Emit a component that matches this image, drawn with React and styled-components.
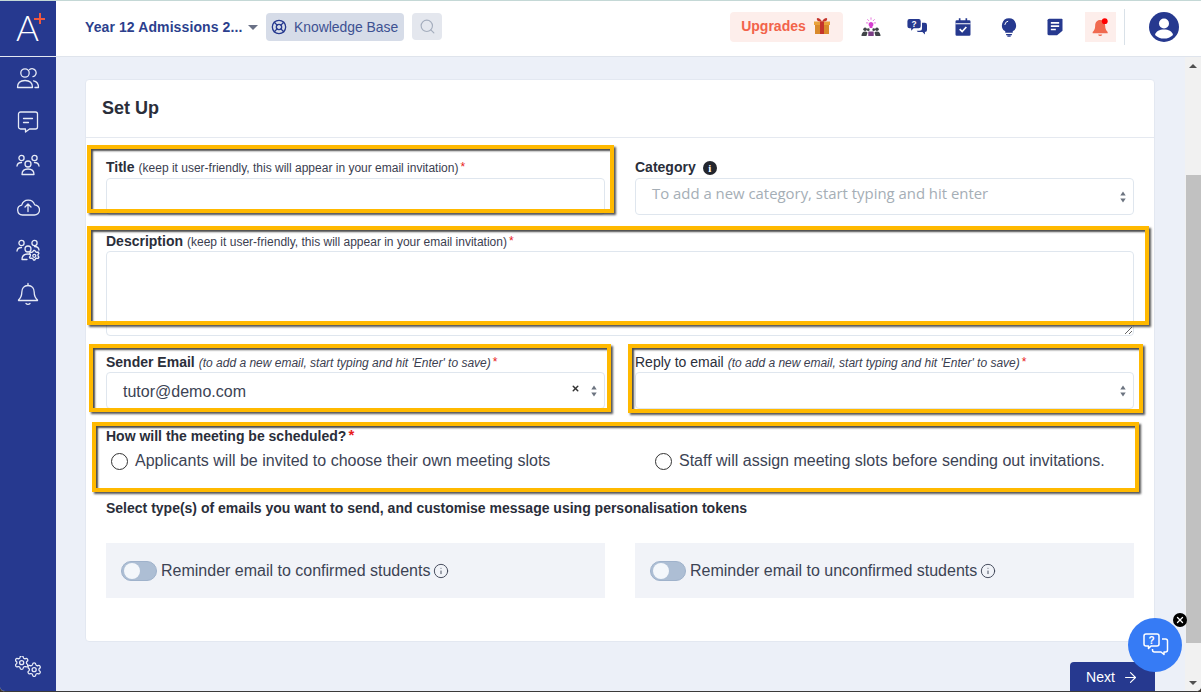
import React from "react";
import styled, { createGlobalStyle } from "styled-components";
import { LifeBuoy, Search, ArrowRight, X, Info } from "lucide-react";

const Global = createGlobalStyle`
  html, body { margin: 0; padding: 0; height: 692px; overflow: hidden; background: #3b332c; }
  * { box-sizing: border-box; }
  body { font-family: "Liberation Sans", Arial, sans-serif; color: #2a2e3a; }
`;

const Page = styled.div`
  width: 1201px; height: 692px; display: flex; position: relative; overflow: hidden;
  background: #ecf0f8; border-top: 1px solid #c4d8d6; border-bottom: 1px solid #3a3a3a;
  border-radius: 0 0 5px 5px;
`;
const Sidebar = styled.aside`
  width: 56px; flex: none; background: #26398f; display: flex; flex-direction: column; align-items: center;
`;
const Logo = styled.div`
  width: 56px; height: 56px; flex: none; border-bottom: 1px solid #e3e8f2; position: relative;
  display: flex; align-items: center; justify-content: center;
`;
const LogoA = styled.span`
  font-family: "Lato", sans-serif; font-weight: 300; font-size: 35px; line-height: 1; color: #fff; margin: -3px 1px 0 0;
`;
const LogoPlus = styled.span`
  position: absolute; left: 34px; top: 12px; width: 11px; height: 11px;
  background:
    linear-gradient(#f0583f, #f0583f) center / 11px 2px no-repeat,
    linear-gradient(#f0583f, #f0583f) center / 2px 11px no-repeat;
`;
const NavList = styled.nav`
  display: flex; flex-direction: column; align-items: center; gap: 19px; padding-top: 10px; flex: 1;
`;
const NavIcon = styled.svg`
  width: 24px; height: 24px; display: block; fill: none; stroke: #e6eaf6; stroke-width: 1.3;
  stroke-linecap: round; stroke-linejoin: round;
`;
const GearsIcon = styled(NavIcon)`
  width: 26px; height: 21px;
`;
const SidebarFoot = styled.div`
  padding-bottom: 14px;
`;
const Body = styled.div`
  flex: 1; display: flex; flex-direction: column; min-width: 0;
`;
const Header = styled.header`
  height: 56px; flex: none; background: #fff; border-bottom: 1px solid #dfe4ec;
  display: flex; align-items: center; padding: 0 22px 4px 29px;
`;
const Crumb = styled.span`
  font-size: 14px; font-weight: 700; color: #2c3f8d; width: 158px; white-space: nowrap; letter-spacing: .1px;
`;
const Caret = styled.span`
  width: 0; height: 0; margin: 2px 8px 0 5px; border-left: 5px solid transparent; border-right: 5px solid transparent;
  border-top: 5px solid #6a7186;
`;
const KbPill = styled.div`
  width: 138px; height: 28px; border-radius: 4px; background: #d6dce8; color: #3d5192; font-size: 13.9px;
  display: flex; align-items: center; gap: 7px; padding-left: 5px;
`;
const SearchBtn = styled.div`
  width: 30px; height: 27px; margin-left: 8px; border-radius: 4px; background: #e4e7ee; color: #a4adbd;
  display: flex; align-items: center; justify-content: center;
`;
const Spacer = styled.div` flex: 1; `;
const Upgrade = styled.div`
  width: 113px; height: 30px; border-radius: 4px; background: #fdeeeb; color: #f2634a; font-size: 14px; font-weight: 700;
  display: flex; align-items: center; justify-content: center; gap: 6px; padding-bottom: 2px;
`;
const TopIcons = styled.div`
  display: flex; align-items: center; gap: 26px; margin-left: 18px;
`;
const TopIcon = styled.svg`
  width: ${p => p.$size || 20}px; height: ${p => p.$size || 20}px; display: block; flex: none;
`;
const BellBox = styled.div`
  width: 31px; height: 30px; margin-left: 20px; background: #fdeeeb; display: flex; align-items: center; justify-content: center;
`;
const Divider = styled.div`
  width: 1px; height: 36px; background: #d9e1e8; margin: 0 24px 0 8px;
`;
const ContentRow = styled.div`
  flex: 1; display: flex; min-height: 0;
`;
const Scroll = styled.main`
  flex: 1; min-width: 0; overflow: hidden; padding: 22px 30px 0 29px;
`;
const Card = styled.section`
  position: relative; height: 563px; background: #fff; border: 1px solid #e3e8f1; border-radius: 4px;
`;
const CardHead = styled.div`
  height: 58px; border-bottom: 1px solid #e5e9f0; display: flex; align-items: center; padding: 0 16px;
`;
const CardTitle = styled.h2`
  margin: 0; font-size: 18px; font-weight: 700; color: #2a2e3a;
`;
const Form = styled.div`
  padding: 20px 20px 0;
`;
const Cols = styled.div`
  display: grid; grid-template-columns: 499px 499px; column-gap: 30px; margin-bottom: 16px;
`;
const Field = styled.div`
  display: flex; flex-direction: column; min-width: 0;
`;
const WideField = styled(Field)`
  margin-bottom: 16px;
`;
const Label = styled.div`
  height: 20px; display: flex; align-items: baseline; white-space: pre; font-size: 14px; color: #2a2e3a;
  line-height: ${p => (p.$raised ? 18 : 20)}px;
  font-weight: ${p => (p.$plain ? 400 : 700)};
`;
const Hint = styled.span`
  font-size: 12px; font-weight: 400; color: #3b4050; margin-left: 4px;
  font-style: ${p => (p.$italic ? "italic" : "normal")};
`;
const Req = styled.sup`
  color: #e81c1c; line-height: 0; margin-left: 2px; position: relative; top: -1px; vertical-align: baseline;
  font-size: ${p => (p.$big ? 15 : 12)}px; font-weight: ${p => (p.$big ? 700 : 400)};
`;
const TextInput = styled.input`
  height: 37px; width: 100%; border: 1px solid #dfe6ee; border-radius: 4px; background: #fff; outline: none; display: block;
`;
const Area = styled.textarea`
  height: 85px; width: 100%; border: 1px solid #dfe6ee; border-radius: 4px; background: #fff; outline: none; display: block; margin: 0;
`;
const SelectBox = styled.div`
  height: 37px; border: 1px solid #dfe6ee; border-radius: 4px; background: #fff; display: flex; align-items: center;
  padding: 0 4px 0 16px; font-size: 16px; color: #3c4354;
`;
const Placeholder = styled.span`
  flex: 1; font-family: "Open Sans", sans-serif; font-size: 14.9px; color: #a5aeb6; margin: -7px 0 0 0;
`;
const Value = styled.span`
  flex: 1; margin-top: 3px;
`;
const ClearX = styled(X)`
  color: #333; margin-right: 9px; margin-top: -5px; stroke-width: 4;
`;
const Updown = styled.svg`
  width: 10px; height: 14px; margin: 0 1px 0 0; fill: #6c7480; display: block;
`;
const QLabel = styled.div`
  margin-top: 17px; font-size: 14px; line-height: 20px; font-weight: 700; color: #2a2e3a;
`;
const RadioRow = styled.div`
  display: grid; grid-template-columns: 544px 1fr; margin-top: 3px; height: 24px; padding-left: 5px;
`;
const RadioItem = styled.label`
  display: flex; align-items: center; gap: 7px; font-size: 16px; color: #3c4354; white-space: nowrap;
`;
const RadioDot = styled.span`
  width: 17px; height: 17px; border-radius: 50%; border: 1.5px solid #333; background: #fff; flex: none;
`;
const SectionNote = styled.div`
  margin-top: 25px; font-size: 14px; line-height: 20px; font-weight: 700; color: #2a2e3a;
`;
const ToggleRow = styled.div`
  display: grid; grid-template-columns: 499px 499px; column-gap: 30px; margin-top: 25px;
`;
const ToggleCard = styled.div`
  height: 55px; background: #f1f3f8; display: flex; align-items: center; padding: 0 15px; font-size: 16px; color: #3c4354;
`;
const Switch = styled.span`
  width: 36px; height: 20px; border-radius: 10px; background: #adbed4; border: 1px solid #9fb2cb; position: relative; flex: none; margin-right: 4px;
  &::after { content: ""; position: absolute; left: 2px; top: 1px; width: 16px; height: 16px; border-radius: 50%; background: #f4f7fb; }
`;
const InfoMark = styled(Info)`
  margin-left: 3px; color: #3c4354; stroke-width: 1.4;
`;
const CatInfo = styled.span`
  width: 14px; height: 14px; border-radius: 50%; background: #23262e; color: #fff; font-size: 11px; font-weight: 700; line-height: 14px;
  text-align: center; margin-left: 7px; align-self: center; font-family: "Liberation Serif", serif;
`;
const Highlight = styled.div`
  position: absolute; pointer-events: none; border: 4px solid #ffb900;
  left: ${p => p.$x - 86}px; top: ${p => p.$y - 80}px; width: ${p => p.$w}px; height: ${p => p.$h}px;
  box-shadow: 2px 2px 2px rgba(30,30,30,.75), inset 2px 2px 2px rgba(30,30,30,.8);
`;
const NextWrap = styled.div`
  display: flex; justify-content: flex-end; margin-top: 20px;
`;
const NextBtn = styled.div`
  width: 85px; height: 36px; background: #26398f; color: #fff; border-radius: 4px 4px 0 0; font-size: 14px;
  display: flex; align-items: flex-start; justify-content: center; gap: 7px; padding-top: 7px;
`;
const Bar = styled.div`
  width: 16px; flex: none; background: #f1f1f1; display: flex; flex-direction: column; align-items: center; justify-content: space-between; position: relative;
`;
const BarArrow = styled.span`
  height: 17px; width: 100%; display: flex; align-items: center; justify-content: center;
  &::after { content: ""; border-left: 4px solid transparent; border-right: 4px solid transparent;
    ${p => (p.$down ? "border-top: 4px solid #505050;" : "border-bottom: 4px solid #505050;")} }
`;
const Thumb = styled.div`
  position: absolute; top: 118px; left: 1px; right: 0; height: 468px; background: #c1c1c1;
`;
const ChatFab = styled.div`
  position: absolute; left: 1128px; top: 617px; width: 54px; height: 54px; border-radius: 50%; background: #367bf5;
  display: flex; align-items: center; justify-content: center; padding-left: 2px;
`;
const ChatClose = styled.div`
  position: absolute; left: 1173px; top: 612px; width: 14px; height: 14px; border-radius: 50%; background: #000; color: #fff;
  display: flex; align-items: center; justify-content: center;
`;

const Arrows = () => (
  <Updown viewBox="0 0 10 14"><path d="M5 1.500l2.700 4H2.300zM5 12.500l2.700-4H2.300z" /></Updown>
);

const NavPeople = () => (
  <NavIcon viewBox="0 0 24 24"><circle cx="9" cy="6" r="4.2" /><path d="M13.6 2.6a4 4 0 1 1 3.4 7" /><path d="M1.5 20.5c0-4.6 3.2-7 7.5-7s7.5 2.4 7.5 7zM17.5 13.8c3 .5 5 2.8 5 6.7h-3.5" /></NavIcon>
);
const NavChat = () => (
  <NavIcon viewBox="0 0 24 24"><path d="M4.500 2h15a2 2 0 0 1 2 2v13a2 2 0 0 1-2 2h-6l-4 3v-3h-5a2 2 0 0 1-2-2V4a2 2 0 0 1 2-2z" /><path d="M7.500 8.500h9M7.500 12.500h5" /></NavIcon>
);
const NavTeam = () => (
  <NavIcon viewBox="0 0 24 24"><circle cx="12" cy="11" r="3" /><circle cx="5.500" cy="5" r="2.600" /><circle cx="18.500" cy="5" r="2.600" /><path d="M6 21.500c0-3.400 2.400-5.500 6-5.500s6 2.100 6 5.500zM1 13c.3-2.400 2-3.500 4.500-3.500M23 13c-.3-2.400-2-3.500-4.500-3.500" /></NavIcon>
);
const NavCloud = () => (
  <NavIcon viewBox="0 0 24 24"><path d="M6.500 19a5 5 0 0 1-.8-9.900 6.800 6.800 0 0 1 13-.2 5 5 0 0 1-.5 10.100z" /><path d="M12 15.500v-7M9 11l3-3 3 3" /></NavIcon>
);
const NavTeamGear = () => (
  <NavIcon viewBox="0 0 24 24"><circle cx="12" cy="10" r="3" /><circle cx="5.500" cy="4" r="2.600" /><circle cx="18.500" cy="4" r="2.600" /><path d="M6 20.500c0-3.400 2.400-5.500 6-5.500 .8 0 1.500.1 2 .3M11 20.500H6M1 12c.3-2.400 2-3.500 4.500-3.500M23 11c-.3-2.400-2-3.500-4.500-3.500" /><path d="M18.500 13.500l1.200.6 1.500-.3.7 1.300-.9 1.200v1.400l.9 1.200-.7 1.300-1.500-.3-1.200.6-.6 1.300h-1.400l-.6-1.300-1.200-.6-1.500.3-.7-1.300.9-1.200v-1.400l-.9-1.200.7-1.300 1.500.3 1.200-.6.6-1.300h1.400z" transform="translate(1 -.8)" /><circle cx="18.300" cy="16.800" r="1.500" /></NavIcon>
);
const NavBell = () => (
  <NavIcon viewBox="0 0 24 24"><path d="M12 3.500c-4 0-6.200 3-6.200 6.800 0 3.700-1.300 6-3.300 7.700v.5h19V18c-2-1.700-3.300-4-3.300-7.700 0-3.800-2.200-6.800-6.200-6.800z" /><path d="M12 1.500v2M10 21.500c1 1 3 1 4 0" /></NavIcon>
);
const gearPath = "M9.671 4.136a2.34 2.34 0 0 1 4.659 0 2.34 2.34 0 0 0 3.319 1.915 2.34 2.34 0 0 1 2.33 4.033 2.34 2.34 0 0 0 0 3.831 2.34 2.34 0 0 1-2.33 4.033 2.34 2.34 0 0 0-3.319 1.915 2.34 2.34 0 0 1-4.659 0 2.34 2.34 0 0 0-3.32-1.915 2.34 2.34 0 0 1-2.33-4.033 2.34 2.34 0 0 0 0-3.831A2.34 2.34 0 0 1 6.35 6.051a2.34 2.34 0 0 0 3.319-1.915";
const NavGears = () => (
  <GearsIcon viewBox="0 0 26 21">
    <g transform="translate(-1.500 -1.500) scale(.68)" strokeWidth="1.900">
      <path d={gearPath} /><circle cx="12" cy="12" r="3" />
    </g>
    <g transform="translate(11 5.500) scale(.68)" strokeWidth="1.900">
      <path d={gearPath} /><circle cx="12" cy="12" r="3" />
    </g>
  </GearsIcon>
);

const Gift = () => (
  <TopIcon viewBox="0 0 20 20" $size={20}>
    <path d="M3 8h14v10H3z" fill="#d98a2b" />
    <path d="M2 5.500h16V9H2z" fill="#e9a23b" />
    <path d="M8 5.500h4V18H8z" fill="#c5352c" />
    <path d="M10 5.500C7 1 4 1.500 5 4c.4 1 2.500 1.500 5 1.500zM10 5.500c3-4.500 6-4 5-1.500-.4 1-2.500 1.500-5 1.500z" fill="#c5352c" />
  </TopIcon>
);
const IdeaTeam = () => (
  <TopIcon viewBox="1 1 22 22">
    <path d="M12 6.500a2.800 2.800 0 0 0-1.500 5.100V13h3v-1.400A2.800 2.800 0 0 0 12 6.500z" fill="#d63fd0" />
    <path d="M12 1.500v2.500M6.500 7.500H9M15 7.500h2.500M8 3.500l1.800 1.800M16 3.500l-1.800 1.800" stroke="#e36ad8" strokeWidth="1" />
    <circle cx="5.500" cy="14.500" r="2" fill="#404548" /><circle cx="18.500" cy="14.500" r="2" fill="#404548" /><circle cx="9" cy="15" r="1.500" fill="#404548" /><circle cx="15" cy="15" r="1.500" fill="#404548" />
    <path d="M1.500 22c0-3 1.500-5 4-5 1.200 0 2 .4 2.700 1L7 22zM22.500 22c0-3-1.500-5-4-5-1.200 0-2 .4-2.700 1L17 22z" fill="#404548" />
    <path d="M9 17h6v5H9z" fill="#7b3f86" />
  </TopIcon>
);
const HelpChat = () => (
  <TopIcon viewBox="0 0 24 24">
    <path d="M3 2.500h11a2.500 2.500 0 0 1 2.500 2.500v6a2.500 2.500 0 0 1-2.500 2.500H8l-3 3v-3H3A2.500 2.500 0 0 1 .5 11V5A2.500 2.500 0 0 1 3 2.500z" fill="#26398f" />
    <path d="M18 7h3.500A2.500 2.500 0 0 1 24 9.500v6a2.500 2.500 0 0 1-2.500 2.500v3l-3-3H14a2.500 2.500 0 0 1-2.300-1.500H15a3 3 0 0 0 3-3z" fill="#26398f" />
    <text x="8.500" y="11.500" textAnchor="middle" fontSize="10" fontWeight="700" fill="#fff" fontFamily="Liberation Sans">?</text>
  </TopIcon>
);
const Calendar = () => (
  <TopIcon viewBox="0 0 24 24">
    <path d="M4.500 4h15a1.500 1.500 0 0 1 1.500 1.500V21a1.500 1.500 0 0 1-1.500 1.500h-15A1.500 1.500 0 0 1 3 21V5.500A1.500 1.500 0 0 1 4.500 4z" fill="#26398f" />
    <path d="M7 1.500h2V6H7zM15 1.500h2V6h-2z" fill="#26398f" />
    <path d="M3 8h18" stroke="#fff" strokeWidth="1.300" />
    <path d="M8 14.500l3 3 5-5.500" stroke="#fff" strokeWidth="2" fill="none" />
  </TopIcon>
);
const Bulb = () => (
  <TopIcon viewBox="0 0 24 24">
    <path d="M12 1.500a8.500 8.500 0 0 0-4.500 15.700V19h9v-1.800A8.500 8.500 0 0 0 12 1.500z" fill="#26398f" />
    <path d="M8.500 21h7M10 23h4" stroke="#26398f" strokeWidth="1.500" />
    <path d="M7 9.500a5 5 0 0 1 4-4.500" stroke="#fff" strokeWidth="1.200" fill="none" />
  </TopIcon>
);
const Note = () => (
  <TopIcon viewBox="0 0 24 24">
    <path d="M5 2h15a1 1 0 0 1 1 1v13.500L14.500 22H5a2 2 0 0 1-2-2V4a2 2 0 0 1 2-2z" fill="#26398f" />
    <path d="M7 7h10M7 11h10M7 15h6" stroke="#fff" strokeWidth="2" />
  </TopIcon>
);
const Bell = () => (
  <TopIcon viewBox="0 0 24 24">
    <path d="M11 3.500c-4 0-6 3-6 7 0 3.500-1 5.500-3 7.500v1.500h18V18c-2-2-3-4-3-7.500 0-4-2-7-6-7z" fill="#f06a50" />
    <path d="M8.500 21a2.600 2.600 0 0 0 5 0z" fill="#f06a50" />
    <circle cx="16.500" cy="5" r="3.500" fill="#f00" />
  </TopIcon>
);
const Avatar = () => (
  <TopIcon viewBox="0 0 30 30" $size={30}>
    <circle cx="15" cy="15" r="15" fill="#26398f" />
    <circle cx="15" cy="11.500" r="5" fill="#fff" />
    <path d="M6 23c1-4 4.500-5.500 9-5.500s8 1.500 9 5.500a13 13 0 0 1-18 0z" fill="#fff" />
  </TopIcon>
);
const FabIcon = () => (
  <TopIcon viewBox="0 0 26 26" $size={26} fill="none" stroke="#fff" strokeWidth="1.500" strokeLinejoin="round">
    <path d="M3 2h11a2 2 0 0 1 2 2v8a2 2 0 0 1-2 2H8l-2.500 2.500V14H3a2 2 0 0 1-2-2V4a2 2 0 0 1 2-2z" />
    <path d="M19 7h3.500a2 2 0 0 1 2 2v9a2 2 0 0 1-2 2H21v2.500L18 20h-6.500a2 2 0 0 1-2-2v-1" />
    <text x="8.500" y="11.500" textAnchor="middle" fontSize="10" fontWeight="700" fill="#fff" stroke="none" fontFamily="Liberation Sans">?</text>
  </TopIcon>
);

export default function App() {
  return (
    <Page>
      <Global />
      <Sidebar>
        <Logo><LogoA>A</LogoA><LogoPlus /></Logo>
        <NavList>
          <NavPeople /><NavChat /><NavTeam /><NavCloud /><NavTeamGear /><NavBell />
        </NavList>
        <SidebarFoot><NavGears /></SidebarFoot>
      </Sidebar>
      <Body>
        <Header>
          <Crumb>Year 12 Admissions 2...</Crumb>
          <Caret />
          <KbPill><LifeBuoy size={16} strokeWidth={2} color="#26398f" />Knowledge Base</KbPill>
          <SearchBtn><Search size={17} strokeWidth={1.6} /></SearchBtn>
          <Spacer />
          <Upgrade>Upgrades <Gift /></Upgrade>
          <TopIcons>
            <IdeaTeam /><HelpChat /><Calendar /><Bulb /><Note />
          </TopIcons>
          <BellBox><Bell /></BellBox>
          <Divider />
          <Avatar />
        </Header>
        <ContentRow>
          <Scroll>
            <Card>
              <CardHead><CardTitle>Set Up</CardTitle></CardHead>
              <Form>
                <Cols>
                  <Field>
                    <Label $raised>Title<Hint>(keep it user-friendly, this will appear in your email invitation)</Hint><Req>*</Req></Label>
                    <TextInput />
                  </Field>
                  <Field>
                    <Label $raised>Category<CatInfo>i</CatInfo></Label>
                    <SelectBox><Placeholder>To add a new category, start typing and hit enter</Placeholder><Arrows /></SelectBox>
                  </Field>
                </Cols>
                <WideField>
                  <Label>Description<Hint>(keep it user-friendly, this will appear in your email invitation)</Hint><Req>*</Req></Label>
                  <Area />
                </WideField>
                <Cols>
                  <Field>
                    <Label>Sender Email<Hint $italic>(to add a new email, start typing and hit 'Enter' to save)</Hint><Req>*</Req></Label>
                    <SelectBox><Value>tutor@demo.com</Value><ClearX size={9} /><Arrows /></SelectBox>
                  </Field>
                  <Field>
                    <Label $plain>Reply to email<Hint $italic>(to add a new email, start typing and hit 'Enter' to save)</Hint><Req>*</Req></Label>
                    <SelectBox><Value /><Arrows /></SelectBox>
                  </Field>
                </Cols>
                <QLabel>How will the meeting be scheduled?<Req $big>*</Req></QLabel>
                <RadioRow>
                  <RadioItem><RadioDot />Applicants will be invited to choose their own meeting slots</RadioItem>
                  <RadioItem><RadioDot />Staff will assign meeting slots before sending out invitations.</RadioItem>
                </RadioRow>
                <SectionNote>Select type(s) of emails you want to send, and customise message using personalisation tokens</SectionNote>
                <ToggleRow>
                  <ToggleCard><Switch />Reminder email to confirmed students<InfoMark size={16} /></ToggleCard>
                  <ToggleCard><Switch />Reminder email to unconfirmed students<InfoMark size={16} /></ToggleCard>
                </ToggleRow>
              </Form>
              <Highlight $x={87} $y={145} $w={527} $h={68} />
              <Highlight $x={87} $y={226} $w={1062} $h={99} />
              <Highlight $x={89} $y={344} $w={522} $h={68} />
              <Highlight $x={628} $y={344} $w={515} $h={69} />
              <Highlight $x={92} $y={422} $w={1047} $h={70} />
            </Card>
            <NextWrap><NextBtn>Next <ArrowRight size={17} strokeWidth={1.6} /></NextBtn></NextWrap>
          </Scroll>
          <Bar>
            <BarArrow />
            <Thumb />
            <BarArrow $down />
          </Bar>
        </ContentRow>
      </Body>
      <ChatFab><FabIcon /></ChatFab>
      <ChatClose><X size={10} strokeWidth={3} /></ChatClose>
    </Page>
  );
}
